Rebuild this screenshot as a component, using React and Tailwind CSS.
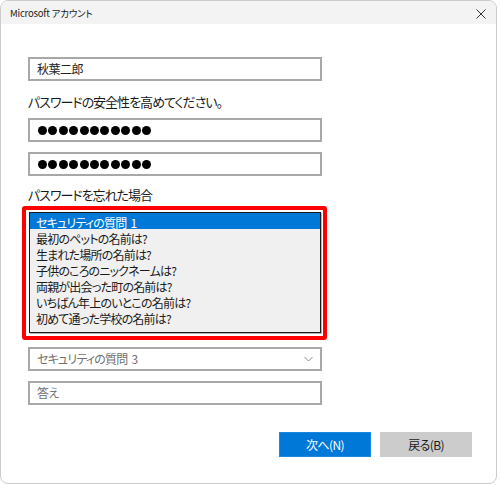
import React from "react";

const items = [
  "最初のペットの名前は?",
  "生まれた場所の名前は?",
  "子供のころのニックネームは?",
  "両親が出会った町の名前は?",
  "いちばん年上のいとこの名前は?",
  "初めて通った学校の名前は?",
];

function Dots() {
  return (
    <div className="flex items-center gap-[1.4px] pl-[8px]">
      {Array.from({ length: 11 }).map((_, i) => (
        <span key={i} className="block w-[9px] h-[9px] rounded-full bg-black" />
      ))}
    </div>
  );
}

export default function App() {
  const font = "font-['Noto_Sans_CJK_JP','Noto_Sans',sans-serif] [font-feature-settings:'palt']";
  return (
    <div className={`w-[500px] h-[485px] bg-white ${font}`}>
      <div className="w-[497px] h-[484px] border border-[#cbcbcb] rounded-[8px] overflow-hidden bg-white flex flex-col">
        <div className="h-[23px] bg-[#f3f3f3] flex items-center justify-between pl-[9px] pr-[10px] shrink-0">
          <span className="text-[9.5px] leading-[14px] tracking-[-0.2px] text-[#1a1a1a] mt-[1px]">Microsoft アカウント</span>
          <svg width="10" height="10" viewBox="0 0 10 10" className="mt-[2px]">
            <path d="M0.5 0.5 L9.5 9.5 M9.5 0.5 L0.5 9.5" stroke="#333" strokeWidth="1" fill="none" />
          </svg>
        </div>
        <div className="flex flex-col pl-[27px]">
          <div className="mt-[33px] w-[294px] h-[24px] border-2 border-[#a8a8a8] flex items-center pl-[7px] text-[12px] tracking-[-0.5px] text-[#222]">
            秋葉二郎
          </div>
          <div className="mt-[11px] h-[20px] leading-[20px] text-[13px] tracking-[-1px] text-[#1a1a1a]">
            パスワードの安全性を高めてください。
          </div>
          <div className="mt-[6px] w-[294px] h-[24px] border-2 border-[#a8a8a8] flex items-center">
            <Dots />
          </div>
          <div className="mt-[10px] w-[294px] h-[24px] border-2 border-[#a8a8a8] flex items-center">
            <Dots />
          </div>
          <div className="mt-[9px] h-[20px] leading-[20px] text-[13px] tracking-[-1px] text-[#1a1a1a]">
            パスワードを忘れた場合
          </div>
          <div className="mt-[1px] -ml-[6px] w-[305px] h-[134px] border-4 border-[#ff0000] rounded-[3px] bg-white pl-[3px] pr-[2px] pt-[2px] pb-[3px]">
            <div className="w-[292px] h-[121px] border border-[#1a1a1a] bg-[#f0f0f0] shadow-[1px_1px_0_#b4b4b4] text-[12px] tracking-[-0.8px]">
              <div className="h-[16px] bg-[#0078d7] text-white pl-[6px] pt-[2px] leading-[16px] overflow-visible whitespace-nowrap">
                セキュリティの質問<span className="ml-[4px]">1</span>
              </div>
              {items.map((t) => (
                <div key={t} className="h-[16px] text-[#1a1a1a] pl-[6px] pt-[2px] leading-[16px] whitespace-nowrap">
                  {t}
                </div>
              ))}
            </div>
          </div>
          <div className="mt-[7px] w-[294px] h-[24px] border-2 border-[#a8a8a8] flex items-center justify-between pl-[7px] pr-[7px] text-[12px] tracking-[-0.8px] text-[#707070]">
            <span>
              セキュリティの質問<span className="ml-[4px]">3</span>
            </span>
            <svg width="9" height="6" viewBox="0 0 9 6">
              <path d="M0.5 1 L4.5 5 L8.5 1" stroke="#8a8a8a" strokeWidth="1" fill="none" />
            </svg>
          </div>
          <div className="mt-[10px] w-[294px] h-[24px] border-2 border-[#a8a8a8] flex items-center pl-[7px] text-[12px] tracking-[-0.5px] text-[#707070]">
            答え
          </div>
          <div className="mt-[27px] flex justify-end gap-[9px] pr-[24px]">
            <div className="w-[92px] h-[25px] bg-[#0078d7] border border-[#1a86dc] flex items-center justify-center text-[12px] tracking-[-0.6px] text-white">
              次へ(N)
            </div>
            <div className="w-[92px] h-[25px] bg-[#cccccc] flex items-center justify-center text-[12px] tracking-[-0.6px] text-[#1a1a1a]">
              戻る(B)
            </div>
          </div>
        </div>
      </div>
    </div>
  );
}
